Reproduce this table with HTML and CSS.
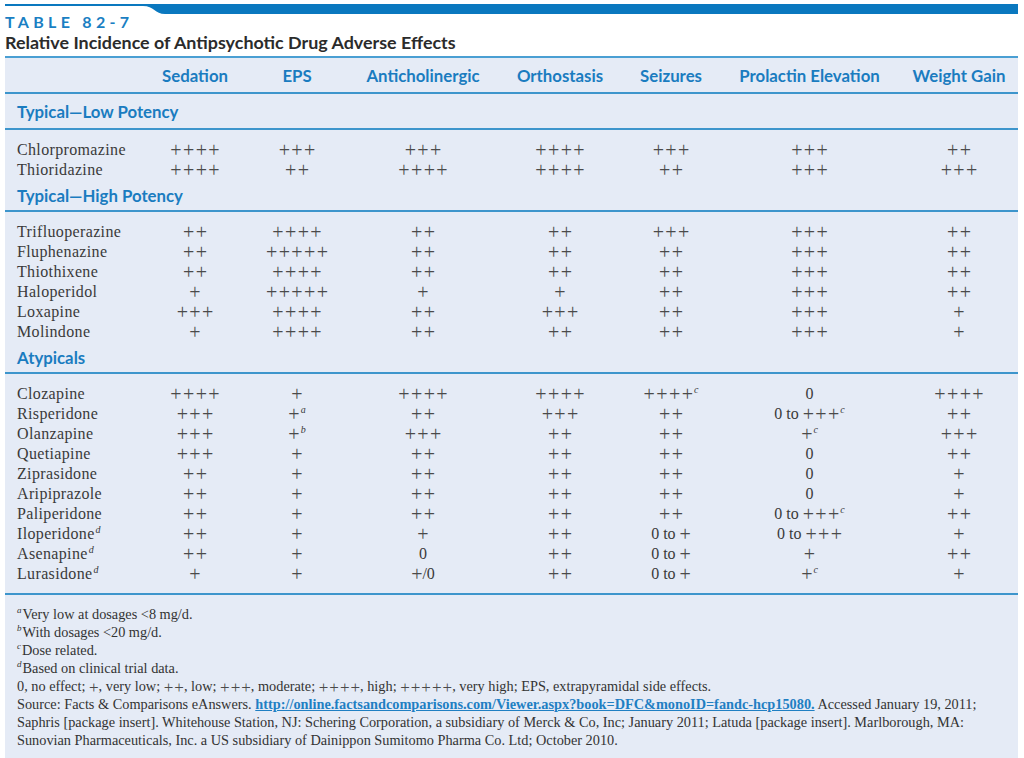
FILE: index.html
```html
<!DOCTYPE html>
<html lang="en">
<head>
<meta charset="utf-8">
<title>Table 82-7</title>
<link rel="stylesheet" href="styles.css">
</head>
<body>
<div class="page">
  <svg class="topbar" width="1013" height="11" viewBox="0 0 1013 11" aria-hidden="true">
    <path d="M0 0 H1013 V10 H160 C150 10 149 2 138 2 H0 Z" fill="#0a78bf"/>
  </svg>
  <div class="label">TABLE 82-7</div>
  <h1 class="title">Relative Incidence of Antipsychotic Drug Adverse Effects</h1>
  <div class="panel">
    <table class="grid">
      <colgroup>
        <col class="c-name"><col class="c-sed"><col class="c-eps"><col class="c-anti"><col class="c-orth"><col class="c-seiz"><col class="c-prol"><col class="c-wt">
      </colgroup>
      <thead>
        <tr class="head">
          <th></th><th>Sedation</th><th>EPS</th><th>Anticholinergic</th><th>Orthostasis</th><th>Seizures</th><th>Prolactin Elevation</th><th>Weight Gain</th>
        </tr>
      </thead>
      <tbody>
        <tr class="sec sec-first"><td colspan="8">Typical—Low Potency</td></tr>
        <tr class="first"><td>Chlorpromazine</td><td><span class="p">++++</span></td><td><span class="p">+++</span></td><td><span class="p">+++</span></td><td><span class="p">++++</span></td><td><span class="p">+++</span></td><td><span class="p">+++</span></td><td><span class="p">++</span></td></tr>
        <tr><td>Thioridazine</td><td><span class="p">++++</span></td><td><span class="p">++</span></td><td><span class="p">++++</span></td><td><span class="p">++++</span></td><td><span class="p">++</span></td><td><span class="p">+++</span></td><td><span class="p">+++</span></td></tr>
        <tr class="sec"><td colspan="8">Typical—High Potency</td></tr>
        <tr class="first"><td>Trifluoperazine</td><td><span class="p">++</span></td><td><span class="p">++++</span></td><td><span class="p">++</span></td><td><span class="p">++</span></td><td><span class="p">+++</span></td><td><span class="p">+++</span></td><td><span class="p">++</span></td></tr>
        <tr><td>Fluphenazine</td><td><span class="p">++</span></td><td><span class="p">+++++</span></td><td><span class="p">++</span></td><td><span class="p">++</span></td><td><span class="p">++</span></td><td><span class="p">+++</span></td><td><span class="p">++</span></td></tr>
        <tr><td>Thiothixene</td><td><span class="p">++</span></td><td><span class="p">++++</span></td><td><span class="p">++</span></td><td><span class="p">++</span></td><td><span class="p">++</span></td><td><span class="p">+++</span></td><td><span class="p">++</span></td></tr>
        <tr><td>Haloperidol</td><td><span class="p">+</span></td><td><span class="p">+++++</span></td><td><span class="p">+</span></td><td><span class="p">+</span></td><td><span class="p">++</span></td><td><span class="p">+++</span></td><td><span class="p">++</span></td></tr>
        <tr><td>Loxapine</td><td><span class="p">+++</span></td><td><span class="p">++++</span></td><td><span class="p">++</span></td><td><span class="p">+++</span></td><td><span class="p">++</span></td><td><span class="p">+++</span></td><td><span class="p">+</span></td></tr>
        <tr><td>Molindone</td><td><span class="p">+</span></td><td><span class="p">++++</span></td><td><span class="p">++</span></td><td><span class="p">++</span></td><td><span class="p">++</span></td><td><span class="p">+++</span></td><td><span class="p">+</span></td></tr>
        <tr class="sec"><td colspan="8">Atypicals</td></tr>
        <tr class="first"><td>Clozapine</td><td><span class="p">++++</span></td><td><span class="p">+</span></td><td><span class="p">++++</span></td><td><span class="p">++++</span></td><td><span class="p">++++</span><sup>c</sup></td><td>0</td><td><span class="p">++++</span></td></tr>
        <tr><td>Risperidone</td><td><span class="p">+++</span></td><td><span class="p">+</span><sup>a</sup></td><td><span class="p">++</span></td><td><span class="p">+++</span></td><td><span class="p">++</span></td><td>0 to <span class="p">+++</span><sup>c</sup></td><td><span class="p">++</span></td></tr>
        <tr><td>Olanzapine</td><td><span class="p">+++</span></td><td><span class="p">+</span><sup>b</sup></td><td><span class="p">+++</span></td><td><span class="p">++</span></td><td><span class="p">++</span></td><td><span class="p">+</span><sup>c</sup></td><td><span class="p">+++</span></td></tr>
        <tr><td>Quetiapine</td><td><span class="p">+++</span></td><td><span class="p">+</span></td><td><span class="p">++</span></td><td><span class="p">++</span></td><td><span class="p">++</span></td><td>0</td><td><span class="p">++</span></td></tr>
        <tr><td>Ziprasidone</td><td><span class="p">++</span></td><td><span class="p">+</span></td><td><span class="p">++</span></td><td><span class="p">++</span></td><td><span class="p">++</span></td><td>0</td><td><span class="p">+</span></td></tr>
        <tr><td>Aripiprazole</td><td><span class="p">++</span></td><td><span class="p">+</span></td><td><span class="p">++</span></td><td><span class="p">++</span></td><td><span class="p">++</span></td><td>0</td><td><span class="p">+</span></td></tr>
        <tr><td>Paliperidone</td><td><span class="p">++</span></td><td><span class="p">+</span></td><td><span class="p">++</span></td><td><span class="p">++</span></td><td><span class="p">++</span></td><td>0 to <span class="p">+++</span><sup>c</sup></td><td><span class="p">++</span></td></tr>
        <tr><td>Iloperidone<sup>d</sup></td><td><span class="p">++</span></td><td><span class="p">+</span></td><td><span class="p">+</span></td><td><span class="p">++</span></td><td>0 to <span class="p">+</span></td><td>0 to <span class="p">+++</span></td><td><span class="p">+</span></td></tr>
        <tr><td>Asenapine<sup>d</sup></td><td><span class="p">++</span></td><td><span class="p">+</span></td><td>0</td><td><span class="p">++</span></td><td>0 to <span class="p">+</span></td><td><span class="p">+</span></td><td><span class="p">++</span></td></tr>
        <tr class="last"><td>Lurasidone<sup>d</sup></td><td><span class="p">+</span></td><td><span class="p">+</span></td><td><span class="p">+</span>/0</td><td><span class="p">++</span></td><td>0 to <span class="p">+</span></td><td><span class="p">+</span><sup>c</sup></td><td><span class="p">+</span></td></tr>
      </tbody>
    </table>
    <div class="notes">
      <p><sup>a</sup>Very low at dosages &lt;8 mg/d.</p>
      <p><sup>b</sup>With dosages &lt;20 mg/d.</p>
      <p><sup>c</sup>Dose related.</p>
      <p><sup>d</sup>Based on clinical trial data.</p>
      <p>0, no effect; <span class="p">+</span>, very low; <span class="p">++</span>, low; <span class="p">+++</span>, moderate; <span class="p">++++</span>, high; <span class="p">+++++</span>, very high; EPS, extrapyramidal side effects.</p>
      <p>Source: Facts &amp; Comparisons eAnswers. <a class="link" href="#">http://online.factsandcomparisons.com/Viewer.aspx?book=DFC&amp;monoID=fandc-hcp15080.</a> Accessed January 19, 2011;<br>Saphris [package insert]. Whitehouse Station, NJ: Schering Corporation, a subsidiary of Merck &amp; Co, Inc; January 2011; Latuda [package insert]. Marlborough, MA:<br>Sunovian Pharmaceuticals, Inc. a US subsidiary of Dainippon Sumitomo Pharma Co. Ltd; October 2010.</p>
    </div>
  </div>
</div>
</body>
</html>
```

FILE: styles.css
```css
* { box-sizing: border-box; }
html, body { margin: 0; padding: 0; background: #ffffff; }
.page {
  width: 1024px;
  padding: 4px 6px 0 5px;
  font-family: "Liberation Serif", serif;
  color: #333333;
}
.topbar { display: block; }
.label {
  margin-top: -2px;
  font-family: Lato, "Open Sans", sans-serif;
  font-weight: 700;
  font-size: 16px;
  line-height: 18px;
  letter-spacing: 4.3px;
  color: #1a7fc3;
}
.title {
  margin: 0;
  font-family: Lato, "Open Sans", sans-serif;
  font-weight: 700;
  font-size: 17.9px;
  line-height: 22px;
  color: #2b2b2b;
}
.panel {
  margin-top: 3px;
  width: 1013px;
  background: #e5ebf6;
  border-top: 2px solid #4a9fd3;
  padding-bottom: 9px;
}
.grid {
  width: 1013px;
  border-collapse: collapse;
  table-layout: fixed;
}
.c-name { width: 140px; }
.c-sed { width: 100px; }
.c-eps { width: 104px; }
.c-anti { width: 148px; }
.c-orth { width: 126px; }
.c-seiz { width: 96px; }
.c-prol { width: 181px; }
.c-wt { width: 118px; }
.head th {
  height: 35px;
  padding: 0;
  font-family: Lato, "Open Sans", sans-serif;
  font-weight: 700;
  font-size: 16.8px;
  color: #1a7cc0;
  text-align: center;
  border-bottom: 2px solid #3d95cc;
}
.sec td {
  height: 31px;
  padding: 0 0 0 12px;
  font-family: Lato, "Open Sans", sans-serif;
  font-weight: 700;
  font-size: 16.8px;
  color: #1a7cc0;
  border-bottom: 2px solid #3d95cc;
  vertical-align: middle;
}
.sec-first td { height: 36px; }
.grid tbody tr:not(.sec) td {
  height: 20px;
  padding: 0;
  line-height: 20px;
  font-size: 16px;
  text-align: center;
  white-space: nowrap;
  vertical-align: top;
  color: #3a3a3a;
}
.grid tbody tr:not(.sec) td:first-child {
  text-align: left;
  padding-left: 12px;
  letter-spacing: 0.35px;
}
.grid tbody tr.first td { padding-top: 10px; height: 30px; }
.grid tbody tr.last td { padding-bottom: 9px; height: 29px; border-bottom: 2px solid #3d95cc; }
.p {
  font-family: "Liberation Serif", serif;
  font-size: 20px;
  line-height: 0;
  font-weight: 400;
  color: #4a4a4a;
  letter-spacing: 1.4px;
  vertical-align: -2px;
}
.p::after { content: ""; margin-right: -1.4px; }
sup {
  font-style: italic;
  font-size: 10px;
  line-height: 0;
  vertical-align: 6px;
  margin-left: 1px;
}
.notes {
  padding: 10px 0 0 12px;
  font-size: 14.3px;
  line-height: 18px;
  color: #333333;
}
.notes p { margin: 0; height: 18px; }
.notes p:last-child { height: auto; }
.notes sup { margin-left: 0; margin-right: 1px; font-size: 9px; }
.notes .p { font-size: 17px; letter-spacing: 1px; vertical-align: -1.5px; }
.notes .p::after { margin-right: -1px; }
.link {
  color: #1f7fc3;
  font-weight: 700;
  text-decoration: underline;
}
```
